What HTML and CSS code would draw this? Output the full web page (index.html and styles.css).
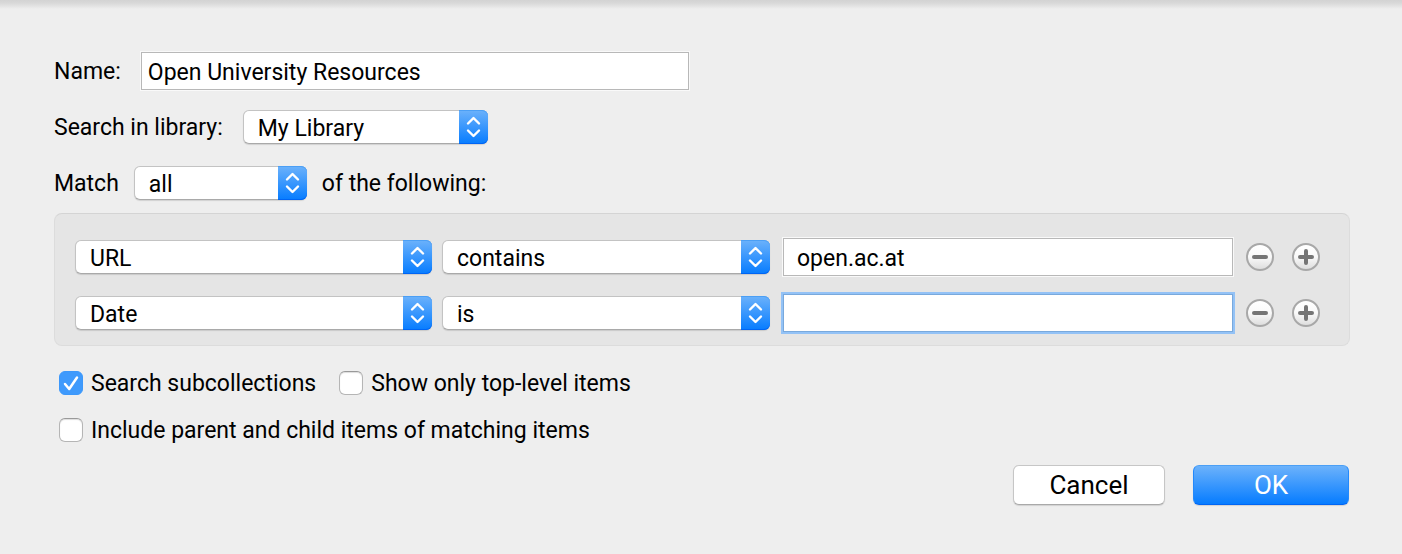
FILE: index.html
```html
<!DOCTYPE html>
<html lang="en">
<head>
<meta charset="utf-8">
<title>Saved Search</title>
<link rel="stylesheet" href="styles.css">
</head>
<body>
<svg class="defs" aria-hidden="true">
  <symbol id="chevrons" viewBox="0 0 29 34"><path d="M9 13.500 14.500 8l5.500 5.500M9 20.500l5.500 5.500 5.500-5.500"/></symbol>
  <symbol id="minus" viewBox="0 0 28 28"><path d="M8 14h12"/></symbol>
  <symbol id="plus" viewBox="0 0 28 28"><path d="M8 14h12M14 8v12"/></symbol>
</svg>
<form class="dialog">
  <div class="row row-wide">
    <label for="name">Name:</label>
    <input class="field name-field" id="name" type="text" value="Open University Resources">
  </div>
  <div class="row row-wide">
    <label for="library">Search in library:</label>
    <span class="popup popup-library"><select id="library"><option>My Library</option></select><svg class="cap"><use href="#chevrons"/></svg></span>
  </div>
  <div class="row">
    <label for="match">Match</label>
    <span class="popup popup-match"><select id="match"><option>all</option><option>any</option></select><svg class="cap"><use href="#chevrons"/></svg></span>
    <label for="match">of the following:</label>
  </div>

  <div class="conditions">
    <div class="condition">
      <span class="popup"><select aria-label="Condition"><option>URL</option></select><svg class="cap"><use href="#chevrons"/></svg></span>
      <span class="popup"><select aria-label="Operator"><option>contains</option></select><svg class="cap"><use href="#chevrons"/></svg></span>
      <input class="field value-field" type="text" aria-label="Value" value="open.ac.at">
      <div class="actions">
        <button class="round" type="button" aria-label="Remove condition"><svg><use href="#minus"/></svg></button>
        <button class="round" type="button" aria-label="Add condition"><svg><use href="#plus"/></svg></button>
      </div>
    </div>
    <div class="condition">
      <span class="popup"><select aria-label="Condition"><option>Date</option></select><svg class="cap"><use href="#chevrons"/></svg></span>
      <span class="popup"><select aria-label="Operator"><option>is</option></select><svg class="cap"><use href="#chevrons"/></svg></span>
      <input class="field value-field active" type="text" aria-label="Value">
      <div class="actions">
        <button class="round" type="button" aria-label="Remove condition"><svg><use href="#minus"/></svg></button>
        <button class="round" type="button" aria-label="Add condition"><svg><use href="#plus"/></svg></button>
      </div>
    </div>
  </div>

  <div class="options">
    <div class="option-row">
      <label class="check"><span class="box"><input type="checkbox" checked><svg class="tick" viewBox="0 0 24 24"><path d="m6 13 4.200 5L18 6.500"/></svg></span><span class="caption">Search subcollections</span></label>
      <label class="check"><span class="box"><input type="checkbox"></span><span class="caption">Show only top-level items</span></label>
    </div>
    <div class="option-row">
      <label class="check"><span class="box"><input type="checkbox"></span><span class="caption">Include parent and child items of matching items</span></label>
    </div>
  </div>

  <div class="buttons">
    <button class="push cancel" type="button">Cancel</button>
    <button class="push ok" type="submit">OK</button>
  </div>
</form>
</body>
</html>
```

FILE: styles.css
```css
* {
  box-sizing: border-box;
}

body {
  margin: 0;
  background: #eeeeee linear-gradient(#d3d3d3, #d8d8d8 3px, #eeeeee 9px) no-repeat;
  color: #000;
  font: 23px/26px Roboto, "Liberation Sans", sans-serif;
}

input,
select,
button {
  margin: 0;
  color: inherit;
  font: inherit;
}

.defs {
  display: none;
}

.dialog {
  padding: 54px 52px 49px 54px;
}

.row {
  display: flex;
  align-items: center;
  gap: 15px;
  height: 34px;
  margin-bottom: 22px;
}

.row-wide {
  gap: 20px;
}

.row label {
  padding-top: 2px;
}

.field {
  min-width: 0;
  height: 38px;
  padding: 2px 6px 0;
  border: 1px solid #b8b8b8;
  border-radius: 0;
  outline: none;
  background: #fff;
  box-shadow: 0 0 0 1px #f9f9f9;
}

.name-field {
  width: 548px;
}

.popup {
  display: grid;
  grid-template-columns: 1fr 29px;
  height: 34px;
}

.popup select {
  grid-area: 1 / 1 / 2 / 3;
  width: 100%;
  min-width: 0;
  height: 34px;
  padding: 4px 36px 0 14px;
  border: 1px solid #c3c3c3;
  border-bottom-color: #a9a9a9;
  border-radius: 6px;
  outline: none;
  appearance: none;
  background: #fff;
  box-shadow: 0 1px 1px rgba(0, 0, 0, 0.12);
}

.cap {
  grid-area: 1 / 2 / 2 / 3;
  width: 29px;
  height: 34px;
  border-radius: 0 6px 6px 0;
  background: linear-gradient(#6cb2fb, #067cff);
  box-shadow: inset 0 1px #4b9ff5, inset 0 -1px #0065f4;
  fill: none;
  stroke: #fff;
  stroke-width: 2.400;
  stroke-linecap: round;
  stroke-linejoin: round;
  pointer-events: none;
}

.popup-library {
  width: 245px;
}

.popup-match {
  width: 173px;
}

.conditions {
  display: grid;
  gap: 22px;
  margin-top: -9px;
  padding: 26px 29px 15px 20px;
  border: 1px solid #dcdcdc;
  border-top-color: #d4d4d4;
  border-radius: 8px;
  background: #e5e5e5;
}

.condition {
  display: grid;
  grid-template: 34px / 357fr 338fr 463fr auto;
  align-items: center;
}

.condition .popup + .popup {
  margin-left: 10px;
}

.value-field {
  margin-left: 13px;
  padding: 2px 13px 0;
}

.value-field.active {
  border-color: #79a9dc;
  box-shadow: 0 0 0 2px #93c2f6;
}

.actions {
  display: flex;
  gap: 18px;
  margin-left: 13px;
}

.round {
  width: 28px;
  height: 28px;
  padding: 0;
  border: 2px solid #a8a8a8;
  border-radius: 50%;
  background: linear-gradient(#fff, #f9f9f9 50%, #dedede);
}

.round svg {
  display: block;
  width: 28px;
  height: 28px;
  margin: -2px;
  stroke: #757575;
  stroke-width: 4;
  stroke-linecap: round;
}

.options {
  display: grid;
  gap: 19px;
  margin-top: 23px;
  padding-left: 5px;
}

.option-row {
  display: flex;
  gap: 23px;
}

.check {
  display: flex;
  align-items: center;
  gap: 8px;
}

.caption {
  padding-top: 2px;
}

.box {
  display: grid;
  width: 24px;
  height: 24px;
}

.box input {
  grid-area: 1 / 1;
  width: 24px;
  height: 24px;
  border: 1px solid #b5b5b5;
  border-top-color: #999;
  border-radius: 6px;
  appearance: none;
  background: #fff;
  box-shadow: inset 0 1px 1px #ddd;
}

.box input:checked {
  border-color: #3c98fb;
  background: #3f9afc;
  box-shadow: none;
}

.tick {
  grid-area: 1 / 1;
  width: 24px;
  height: 24px;
  fill: none;
  stroke: #fff;
  stroke-width: 2.500;
  stroke-linecap: round;
  stroke-linejoin: round;
  pointer-events: none;
}

.buttons {
  display: flex;
  justify-content: flex-end;
  gap: 28px;
  margin-top: 21px;
  padding-right: 1px;
}

.push {
  height: 40px;
  padding: 0;
  border: 1px solid #c6c6c6;
  border-bottom-color: #a9a9a9;
  border-radius: 6px;
  box-shadow: 0 1px 1px rgba(0, 0, 0, 0.12);
  font-size: 26px;
}

.cancel {
  width: 152px;
  background: #fff;
}

.ok {
  width: 156px;
  border-color: #4b9ff5 #2389fc #0065f4;
  background: linear-gradient(#6cb2fb, #067cff);
  color: #fff;
}
```
